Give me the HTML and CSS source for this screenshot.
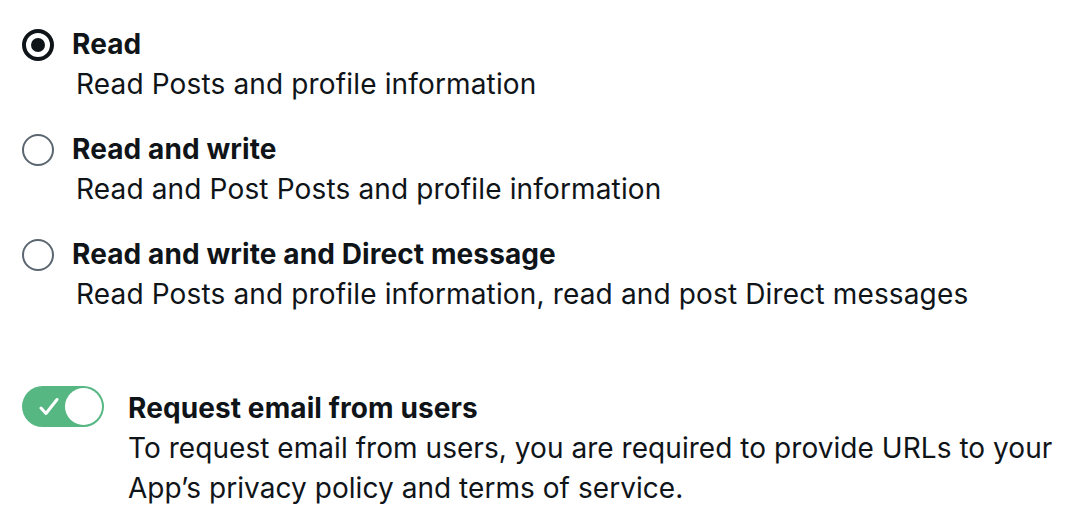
FILE: index.html
```html
<!DOCTYPE html>
<html lang="en">
<head>
<meta charset="utf-8">
<title>App permissions</title>
<link rel="stylesheet" href="styles.css">
</head>
<body>
<div class="settings">
  <div class="radio-group">
    <label class="option">
      <span class="radio radio--checked"><span class="radio__dot"></span></span>
      <span class="option__text">
        <span class="option__title">Read</span>
        <span class="option__desc">Read Posts and profile information</span>
      </span>
    </label>
    <label class="option">
      <span class="radio"></span>
      <span class="option__text">
        <span class="option__title">Read and write</span>
        <span class="option__desc">Read and Post Posts and profile information</span>
      </span>
    </label>
    <label class="option">
      <span class="radio"></span>
      <span class="option__text">
        <span class="option__title">Read and write and Direct message</span>
        <span class="option__desc">Read Posts and profile information, read and post Direct messages</span>
      </span>
    </label>
  </div>

  <div class="switch-row">
    <span class="switch">
      <svg class="switch__check" width="20" height="19" viewBox="0 0 20 19" aria-hidden="true">
        <path d="M2 11 L7 16.5 L18 2.5" fill="none" stroke="#ffffff" stroke-width="3" stroke-linecap="round" stroke-linejoin="round"/>
      </svg>
      <span class="switch__knob"></span>
    </span>
    <span class="option__text">
      <span class="option__title">Request email from users</span>
      <span class="switch__desc">To request email from users, you are required to provide URLs to your App’s privacy policy and terms of service.</span>
    </span>
  </div>
</div>
</body>
</html>
```
FILE: styles.css
```css
html, body {
  margin: 0;
  padding: 0;
  background: #ffffff;
}

body {
  font-family: Inter, "Noto Sans", "Liberation Sans", sans-serif;
  color: #0f1419;
  font-size: 28px;
  line-height: 40px;
}

.settings {
  padding: 24px 0 0 22px;
  display: flex;
  flex-direction: column;
  gap: 74px;
}

.radio-group {
  display: flex;
  flex-direction: column;
  gap: 25px;
}

.option {
  display: flex;
  align-items: flex-start;
  gap: 18px;
}

.radio {
  box-sizing: border-box;
  width: 32px;
  height: 32px;
  margin-top: 5px;
  border-radius: 50%;
  border: 2px solid #5b6670;
  display: flex;
  align-items: center;
  justify-content: center;
  flex: none;
}

.radio--checked {
  border: 4px solid #0f1419;
}

.radio__dot {
  width: 14px;
  height: 14px;
  border-radius: 50%;
  background: #0f1419;
}

.option__text {
  display: flex;
  flex-direction: column;
}

.option__title {
  font-weight: 700;
  letter-spacing: 0.1px;
}

.option__desc {
  padding-left: 4px;
  letter-spacing: 0.15px;
}

.switch__desc {
  letter-spacing: 0.05px;
}

.switch-row {
  display: flex;
  align-items: flex-start;
  gap: 24px;
}

.switch {
  box-sizing: border-box;
  width: 82px;
  height: 41px;
  margin-top: -2px;
  border-radius: 21px;
  background: #56b783;
  display: flex;
  align-items: center;
  justify-content: space-between;
  padding: 0 2px 0 17px;
  flex: none;
}

.switch__check {
  display: block;
}

.switch__knob {
  box-sizing: border-box;
  width: 37px;
  height: 37px;
  border-radius: 50%;
  background: #ffffff;
}
```
